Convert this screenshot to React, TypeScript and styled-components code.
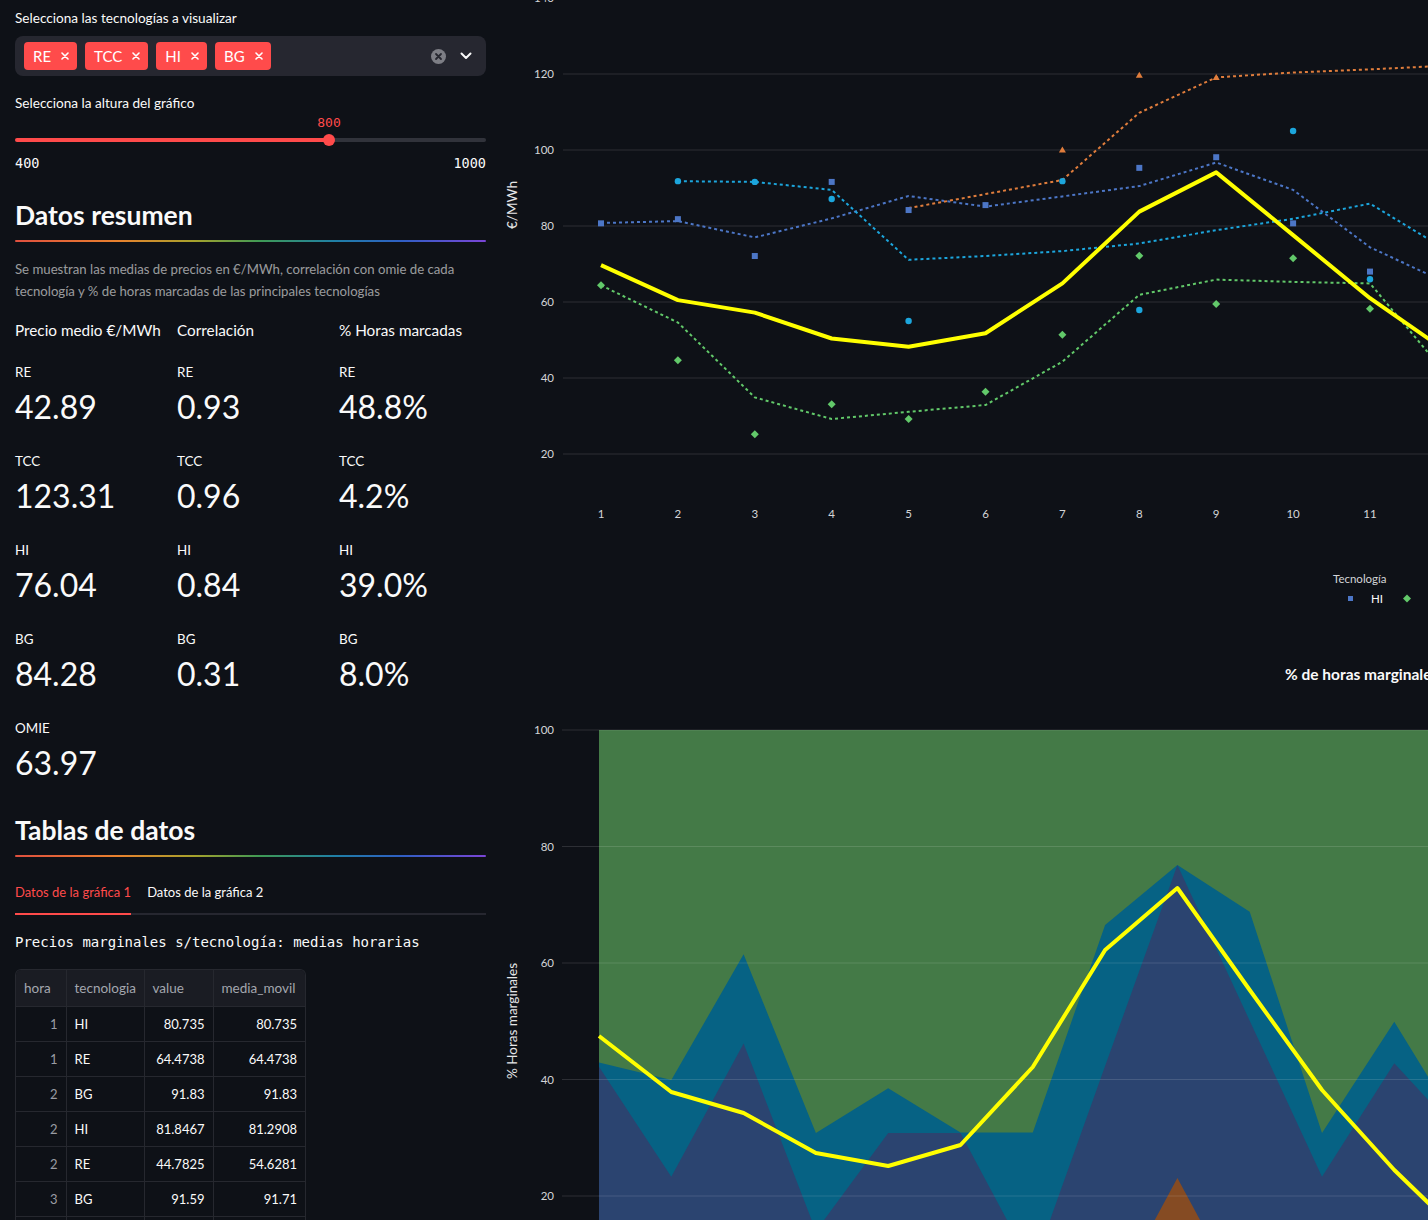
import React from "react";
import styled, { createGlobalStyle } from "styled-components";

const GlobalStyle = createGlobalStyle`
  html, body { margin: 0; padding: 0; background: #0e1117; overflow: hidden; }
  body { color: #fafafa; font-family: Lato, "Noto Sans", sans-serif; }
  * { box-sizing: border-box; }
`;

const Page = styled.div`
  display: grid;
  grid-template-columns: 471px 932px;
  column-gap: 10px;
  padding-left: 15px;
  height: 1220px;
  overflow: hidden;
`;

const LeftCol = styled.div`
  display: flex;
  flex-direction: column;
  padding-top: 8px;
`;

const WidgetLabel = styled.div<{ $mt?: number; $mb?: number }>`
  font-size: 13.6px;
  line-height: 21px;
  margin-top: ${(p) => p.$mt ?? 0}px;
  margin-bottom: ${(p) => p.$mb ?? 7}px;
  color: #fafafa;
`;

const MultiSelect = styled.div`
  height: 40px;
  background: #262730;
  border-radius: 8px;
  display: flex;
  align-items: center;
  padding: 0 14px 0 9px;
  gap: 8px;
`;

const Tag = styled.div`
  height: 28px;
  background: #ff4b4b;
  border-radius: 4px;
  padding: 0 8px 0 9px;
  display: flex;
  align-items: center;
  gap: 10px;
  font-size: 15px;
  color: #fff;
`;

const Spacer = styled.div`
  flex: 1;
`;

const IconWrap = styled.div<{ $ml?: number }>`
  display: flex;
  align-items: center;
  justify-content: center;
  margin-left: ${(p) => p.$ml ?? 0}px;
`;

const SliderArea = styled.div`
  position: relative;
  padding-top: 24.5px;
`;

const Track = styled.div<{ $pct: number }>`
  position: relative;
  height: 4px;
  border-radius: 2px;
  background: linear-gradient(
    to right,
    #ff4b4b 0,
    #ff4b4b ${(p) => p.$pct}%,
    #31333b ${(p) => p.$pct}%,
    #31333b 100%
  );
`;

const Thumb = styled.div<{ $pct: number }>`
  position: absolute;
  left: ${(p) => p.$pct}%;
  top: 50%;
  width: 12px;
  height: 12px;
  margin: -6px 0 0 -6px;
  border-radius: 50%;
  background: #ff4b4b;
`;

const ThumbValue = styled.div<{ $pct: number }>`
  position: absolute;
  left: ${(p) => p.$pct}%;
  top: -25px;
  transform: translateX(-50%);
  font-family: "DejaVu Sans Mono", "Liberation Mono", monospace;
  font-size: 13px;
  line-height: 20px;
  color: #ff4b4b;
`;

const TickRow = styled.div`
  display: flex;
  justify-content: space-between;
  margin-top: 11px;
  font-family: "DejaVu Sans Mono", "Liberation Mono", monospace;
  font-size: 13.5px;
  line-height: 20px;
  color: #fafafa;
`;

const Heading = styled.h2<{ $mt: number }>`
  margin: ${(p) => p.$mt}px 0 0 0;
  font-size: 26.5px;
  line-height: 34px;
  font-weight: 700;
  color: #fafafa;
`;

const Rainbow = styled.div`
  margin-top: 8px;
  height: 2px;
  border-radius: 1px;
  background: linear-gradient(
    to right,
    #e0503f 0%,
    #e8822e 22%,
    #a6a22c 38%,
    #3f9a55 52%,
    #1f7fa6 68%,
    #2f5fc4 82%,
    #7a45d6 100%
  );
`;

const Caption = styled.p`
  margin: 16px 0 0 0;
  font-size: 13.2px;
  line-height: 22px;
  color: rgba(250, 250, 250, 0.6);
`;

const MetricsGrid = styled.div`
  display: grid;
  grid-template-columns: repeat(3, 1fr);
  column-gap: 15px;
  margin-top: 16px;
`;

const MetricColumn = styled.div`
  display: flex;
  flex-direction: column;
`;

const ColHeader = styled.div`
  font-size: 15.3px;
  line-height: 24px;
  white-space: nowrap;
  margin-bottom: 19.5px;
`;

const MetricList = styled.div`
  display: flex;
  flex-direction: column;
  gap: 22px;
`;

const Metric = styled.div`
  display: flex;
  flex-direction: column;
  gap: 2px;
`;

const MetricLabel = styled.div`
  font-size: 13.4px;
  line-height: 21px;
`;

const MetricValue = styled.div`
  font-size: 32px;
  line-height: 44px;
  font-weight: 400;
`;

const TabList = styled.div`
  display: flex;
  gap: 16px;
  margin-top: 24.5px;
  border-bottom: 2px solid #262730;
`;

const Tab = styled.div<{ $active?: boolean }>`
  font-size: 13px;
  line-height: 21px;
  padding-bottom: 10.5px;
  margin-bottom: -2px;
  border-bottom: 2px solid ${(p) => (p.$active ? "#ff4b4b" : "transparent")};
  color: ${(p) => (p.$active ? "#ff4b4b" : "#fafafa")};
`;

const MonoText = styled.div`
  margin-top: 16.5px;
  font-family: "DejaVu Sans Mono", "Liberation Mono", monospace;
  font-size: 14px;
  line-height: 21px;
  color: #fafafa;
`;

const TableFrame = styled.div`
  margin-top: 16.5px;
  width: 291px;
  border: 1px solid #26282f;
  border-bottom: none;
  border-radius: 6px 6px 0 0;
  overflow: hidden;
`;

const DataTable = styled.table`
  border-collapse: collapse;
  table-layout: fixed;
  width: 100%;
  font-size: 13px;
`;

const Th = styled.th<{ $w: number }>`
  width: ${(p) => p.$w}px;
  height: 36px;
  padding: 0 8px;
  text-align: left;
  font-weight: 400;
  font-size: 13.5px;
  color: #a3a6ae;
  background: #1a1c23;
  border-right: 1px solid #26282f;
  border-bottom: 1px solid #26282f;
  &:last-child { border-right: none; }
`;

const Td = styled.td<{ $index?: boolean; $num?: boolean }>`
  height: 35px;
  padding: 0 8px;
  text-align: ${(p) => (p.$num || p.$index ? "right" : "left")};
  color: ${(p) => (p.$index ? "#9a9ca3" : "#fafafa")};
  border-right: 1px solid #26282f;
  border-bottom: 1px solid #26282f;
  &:last-child { border-right: none; }
`;

const RightCol = styled.div`
  display: flex;
  flex-direction: column;
  overflow: hidden;
`;

const ChartSvg = styled.svg`
  display: block;
  flex: none;
  font-family: Lato, "Noto Sans", sans-serif;
`;

/* ---------- chart 1 helpers ---------- */
const X1 = (h: number) => 601 + (h - 1) * 76.9;
const Y1 = (v: number) => 530 - v * 3.8;
const line1 = (start: number, vals: number[]) =>
  vals
    .map((v, i) => `${i ? "L" : "M"}${X1(start + i).toFixed(1)},${Y1(v).toFixed(1)}`)
    .join(" ");

const C_HI = "#4c76c6";
const C_BG = "#1ca6dd";
const C_TCC = "#e07d3c";
const C_RE = "#62c96a";

const omie1 = [69.7, 60.5, 57.2, 50.4, 48.2, 51.8, 64.9, 83.8, 94.1, 77.6, 61, 47];
const hiMA = [80.8, 81.3, 77.0, 82.0, 87.9, 85.1, 87.8, 90.5, 96.7, 89.5, 74.4, 65];
const hiPts: [number, number][] = [
  [1, 80.7], [2, 81.8], [3, 72.1], [4, 91.6], [5, 84.2], [6, 85.5], [8, 95.3], [9, 98.1], [10, 80.7], [11, 68],
];
const bgMA = [91.8, 91.6, 89.5, 71.1, 72.1, 73.4, 75.4, 78.9, 81.9, 85.9, 73.6];
const bgPts: [number, number][] = [
  [2, 91.8], [3, 91.6], [4, 87.1], [5, 55], [7, 91.8], [8, 57.9], [10, 105], [11, 66],
];
const tccMA = [84.7, 88.4, 92.1, 109.8, 119.1, 120.4, 121.2, 122.2];
const tccPts: [number, number][] = [[7, 100], [8, 119.7], [9, 119.1]];
const reMA = [64.4, 54.6, 34.9, 29.2, 31.1, 32.9, 44.3, 61.9, 65.9, 65.3, 64.9, 40.8];
const rePts: [number, number][] = [
  [1, 64.4], [2, 44.7], [3, 25.2], [4, 33.1], [5, 29.2], [6, 36.4], [7, 51.4], [8, 72.2], [9, 59.5], [10, 71.5], [11, 58.2],
];

const Square = ({ x, y, c, s = 6 }: { x: number; y: number; c: string; s?: number }) => (
  <rect x={x - s / 2} y={y - s / 2} width={s} height={s} fill={c} />
);
const Diamond = ({ x, y, c }: { x: number; y: number; c: string }) => (
  <path d={`M${x},${y - 4} L${x + 4},${y} L${x},${y + 4} L${x - 4},${y} Z`} fill={c} />
);
const Tri = ({ x, y, c }: { x: number; y: number; c: string }) => (
  <path d={`M${x},${y - 3.5} L${x + 3.5},${y + 2.5} L${x - 3.5},${y + 2.5} Z`} fill={c} />
);

const TICK = "#d4d5d8";
const GRID = "rgba(255,255,255,0.13)";

const Chart1 = () => (
  <ChartSvg width={932} height={650} viewBox="496 0 932 650">
    {[140, 120, 100, 80, 60, 40, 20].map((v) => (
      <g key={v}>
        <line x1={563} x2={1520} y1={Y1(v)} y2={Y1(v)} stroke={GRID} strokeWidth={1} />
        <text x={554} y={Y1(v)} dy="0.35em" textAnchor="end" fontSize={11.5} fill={TICK}>
          {v}
        </text>
      </g>
    ))}
    {Array.from({ length: 12 }, (_, i) => i + 1).map((h) => (
      <text key={h} x={X1(h)} y={514} dy="0.35em" textAnchor="middle" fontSize={11.5} fill={TICK}>
        {h}
      </text>
    ))}
    <text
      x={512}
      y={205}
      transform="rotate(-90 512 205)"
      textAnchor="middle"
      dy="0.35em"
      fontSize={13.5}
      fill="#e6e6e8"
    >
      €/MWh
    </text>

    <path d={line1(1, hiMA)} fill="none" stroke={C_HI} strokeWidth={2} strokeDasharray="3 3" />
    <path d={line1(2, bgMA)} fill="none" stroke={C_BG} strokeWidth={2} strokeDasharray="3 3" />
    <path d={line1(5, tccMA)} fill="none" stroke={C_TCC} strokeWidth={2} strokeDasharray="3 3" />
    <path d={line1(1, reMA)} fill="none" stroke={C_RE} strokeWidth={2} strokeDasharray="3 3" />

    {hiPts.map(([h, v]) => (
      <Square key={`hi${h}`} x={X1(h)} y={Y1(v)} c={C_HI} />
    ))}
    {bgPts.map(([h, v]) => (
      <circle key={`bg${h}`} cx={X1(h)} cy={Y1(v)} r={3.2} fill={C_BG} />
    ))}
    {tccPts.map(([h, v]) => (
      <Tri key={`tcc${h}`} x={X1(h)} y={Y1(v)} c={C_TCC} />
    ))}
    {rePts.map(([h, v]) => (
      <Diamond key={`re${h}`} x={X1(h)} y={Y1(v)} c={C_RE} />
    ))}

    <path
      d={line1(1, omie1)}
      fill="none"
      stroke="#ffff00"
      strokeWidth={4}
      strokeLinejoin="round"
    />

    <text x={1333} y={583} fontSize={11.5} fill={TICK}>
      Tecnología
    </text>
    <Square x={1350.5} y={598.5} c={C_HI} s={5} />
    <text x={1371} y={602.5} fontSize={11.5} fill="#fafafa">
      HI
    </text>
    <Diamond x={1407} y={598.5} c={C_RE} />
    <Square x={1431} y={598.5} c="#e0463f" s={6} />
  </ChartSvg>
);

/* ---------- chart 2 helpers ---------- */
const X2 = (h: number) => 599 + (h - 1) * 72.3;
const Y2 = (v: number) => 730 + (100 - v) * 5.825;
const area2 = (vals: number[]) =>
  `M${X2(1)},${Y2(0)} ` +
  vals.map((v, i) => `L${X2(i + 1).toFixed(1)},${Y2(v).toFixed(1)}`).join(" ") +
  ` L${X2(vals.length)},${Y2(0)} Z`;

const tealTop = [42.9, 39.9, 61.5, 30.8, 38.5, 30.9, 30.9, 66.5, 76.8, 68.8, 30.8, 49.9, 29.7, 40];
const navyTop = [42.2, 23.3, 46.2, 14, 30.8, 30.8, 7.6, 42.3, 76.8, 50.1, 23.3, 42.8, 29.3, 35];
const orangeTop = [0, 0, 0, 0, 0, 0, 0, 0, 23.1, 0, 0, 0, 0, 0];
const omie2: [number, number][] = [
  [599, 1036], [671.3, 1092], [743.6, 1113], [815.9, 1153], [888.2, 1166], [960.5, 1145],
  [1032.8, 1067], [1105.1, 950], [1177.4, 888], [1249.7, 990], [1322, 1090], [1394.3, 1170], [1466.6, 1240],
];

const Chart2 = () => (
  <ChartSvg width={932} height={570} viewBox="496 650 932 570">
    <text x={1285} y={680} fontSize={15.5} fontWeight={700} fill="#fafafa">
      % de horas marginales por tecnología
    </text>
    <rect x={599} y={Y2(100)} width={1000} height={Y2(0) - Y2(100)} fill="#447a47" />
    <path d={area2(tealTop)} fill="#066284" />
    <path d={area2(navyTop)} fill="#2b4470" />
    <path d={area2(orangeTop)} fill="#854b23" />
    {[100, 80, 60, 40, 20].map((v) => (
      <g key={v}>
        <line x1={562} x2={1520} y1={Y2(v)} y2={Y2(v)} stroke={GRID} strokeWidth={1} />
        <text x={554} y={Y2(v)} dy="0.35em" textAnchor="end" fontSize={11.5} fill={TICK}>
          {v}
        </text>
      </g>
    ))}
    <text
      x={512}
      y={1021}
      transform="rotate(-90 512 1021)"
      textAnchor="middle"
      dy="0.35em"
      fontSize={13.5}
      fill="#e6e6e8"
    >
      % Horas marginales
    </text>
    <path
      d={omie2.map(([x, y], i) => `${i ? "L" : "M"}${x},${y}`).join(" ")}
      fill="none"
      stroke="#ffff00"
      strokeWidth={4}
      strokeLinejoin="round"
    />
  </ChartSvg>
);

const XIcon = ({ size = 8, color = "#fff", sw = 1.6 }: { size?: number; color?: string; sw?: number }) => (
  <svg width={size} height={size} viewBox="0 0 8 8">
    <path d="M1 1 L7 7 M7 1 L1 7" stroke={color} strokeWidth={sw} strokeLinecap="round" />
  </svg>
);

const ClearIcon = () => (
  <svg width={15} height={15} viewBox="0 0 15 15">
    <circle cx={7.5} cy={7.5} r={7.5} fill="#7d7e85" />
    <path d="M5 5 L10 10 M10 5 L5 10" stroke="#262730" strokeWidth={1.8} strokeLinecap="round" />
  </svg>
);

const Chevron = () => (
  <svg width={12} height={8} viewBox="0 0 12 8">
    <path d="M1.5 1.5 L6 6 L10.5 1.5" fill="none" stroke="#fafafa" strokeWidth={2} strokeLinecap="round" strokeLinejoin="round" />
  </svg>
);

const techs = ["RE", "TCC", "HI", "BG"];
const prices = ["42.89", "123.31", "76.04", "84.28"];
const corrs = ["0.93", "0.96", "0.84", "0.31"];
const hours = ["48.8%", "4.2%", "39.0%", "8.0%"];

const rows: [string, string, string, string][] = [
  ["1", "HI", "80.735", "80.735"],
  ["1", "RE", "64.4738", "64.4738"],
  ["2", "BG", "91.83", "91.83"],
  ["2", "HI", "81.8467", "81.2908"],
  ["2", "RE", "44.7825", "54.6281"],
  ["3", "BG", "91.59", "91.71"],
  ["3", "HI", "72.1", "78.2072"],
];

const pct = ((800 - 400) / 600) * 100;

export default function App() {
  return (
    <>
      <GlobalStyle />
      <Page>
        <LeftCol>
          <WidgetLabel>Selecciona las tecnologías a visualizar</WidgetLabel>
          <MultiSelect>
            {techs.map((t) => (
              <Tag key={t}>
                {t}
                <XIcon />
              </Tag>
            ))}
            <Spacer />
            <IconWrap>
              <ClearIcon />
            </IconWrap>
            <IconWrap $ml={6}>
              <Chevron />
            </IconWrap>
          </MultiSelect>

          <WidgetLabel $mt={16.5} $mb={0}>
            Selecciona la altura del gráfico
          </WidgetLabel>
          <SliderArea>
            <Track $pct={pct}>
              <ThumbValue $pct={pct}>800</ThumbValue>
              <Thumb $pct={pct} />
            </Track>
            <TickRow>
              <span>400</span>
              <span>1000</span>
            </TickRow>
          </SliderArea>

          <Heading $mt={25}>Datos resumen</Heading>
          <Rainbow />
          <Caption>
            Se muestran las medias de precios en €/MWh, correlación con omie de cada tecnología y % de
            horas marcadas de las principales tecnologías
          </Caption>

          <MetricsGrid>
            <MetricColumn>
              <ColHeader>Precio medio €/MWh</ColHeader>
              <MetricList>
                {techs.map((t, i) => (
                  <Metric key={t}>
                    <MetricLabel>{t}</MetricLabel>
                    <MetricValue>{prices[i]}</MetricValue>
                  </Metric>
                ))}
                <Metric>
                  <MetricLabel>OMIE</MetricLabel>
                  <MetricValue>63.97</MetricValue>
                </Metric>
              </MetricList>
            </MetricColumn>
            <MetricColumn>
              <ColHeader>Correlación</ColHeader>
              <MetricList>
                {techs.map((t, i) => (
                  <Metric key={t}>
                    <MetricLabel>{t}</MetricLabel>
                    <MetricValue>{corrs[i]}</MetricValue>
                  </Metric>
                ))}
              </MetricList>
            </MetricColumn>
            <MetricColumn>
              <ColHeader>% Horas marcadas</ColHeader>
              <MetricList>
                {techs.map((t, i) => (
                  <Metric key={t}>
                    <MetricLabel>{t}</MetricLabel>
                    <MetricValue>{hours[i]}</MetricValue>
                  </Metric>
                ))}
              </MetricList>
            </MetricColumn>
          </MetricsGrid>

          <Heading $mt={28.5}>Tablas de datos</Heading>
          <Rainbow />

          <TabList>
            <Tab $active>Datos de la gráfica 1</Tab>
            <Tab>Datos de la gráfica 2</Tab>
          </TabList>

          <MonoText>Precios marginales s/tecnología: medias horarias</MonoText>

          <TableFrame>
            <DataTable>
              <thead>
                <tr>
                  <Th $w={50}>hora</Th>
                  <Th $w={78}>tecnologia</Th>
                  <Th $w={69}>value</Th>
                  <Th $w={92}>media_movil</Th>
                </tr>
              </thead>
              <tbody>
                {rows.map((r, i) => (
                  <tr key={i}>
                    <Td $index>{r[0]}</Td>
                    <Td>{r[1]}</Td>
                    <Td $num>{r[2]}</Td>
                    <Td $num>{r[3]}</Td>
                  </tr>
                ))}
              </tbody>
            </DataTable>
          </TableFrame>
        </LeftCol>

        <RightCol>
          <Chart1 />
          <Chart2 />
        </RightCol>
      </Page>
    </>
  );
}
